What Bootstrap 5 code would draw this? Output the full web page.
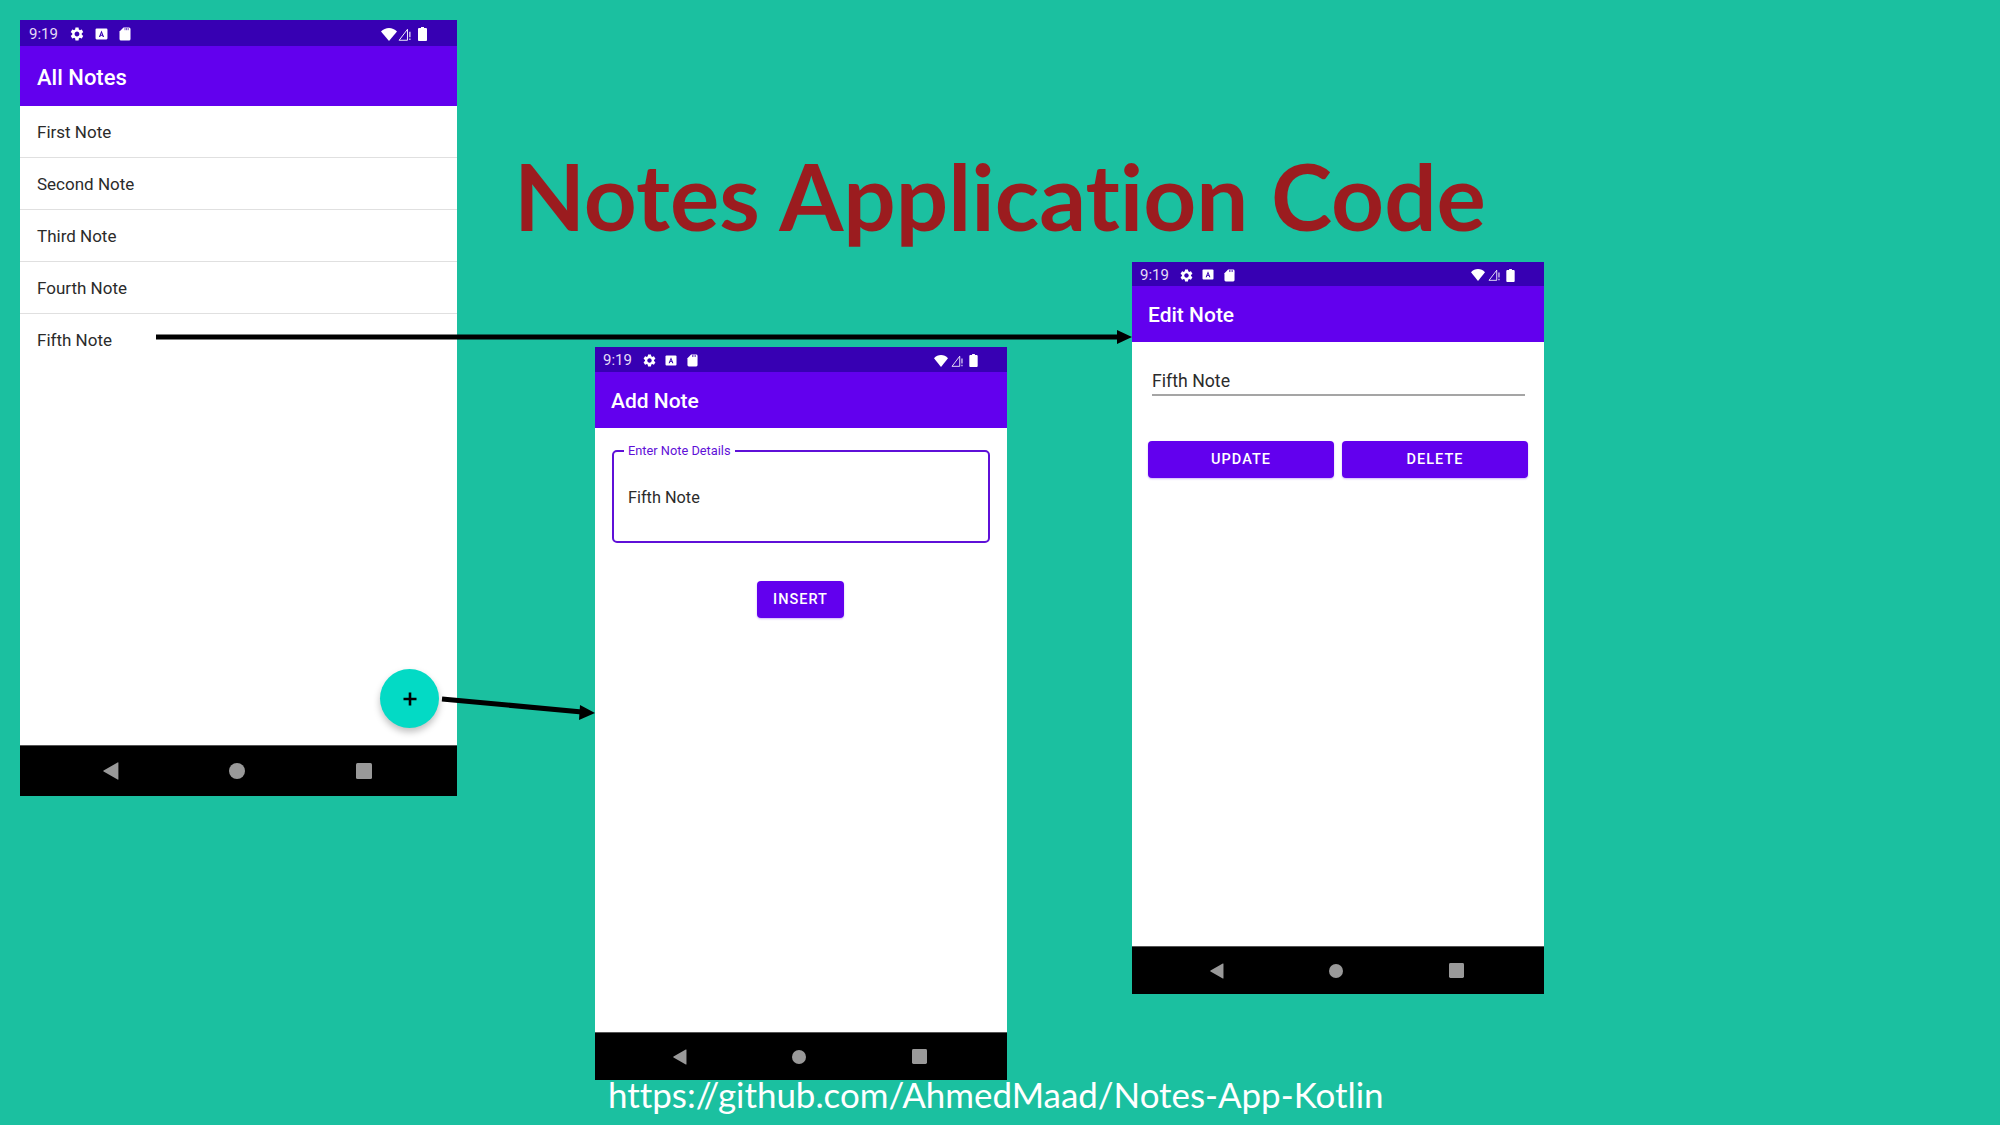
<!DOCTYPE html>
<html lang="en">
<head>
  <meta charset="UTF-8">
  <meta name="viewport" content="width=device-width, initial-scale=1.0">
  <title>Notes Application Code</title>
  <link href="https://cdn.jsdelivr.net/npm/bootstrap@5.3.0/dist/css/bootstrap.min.css" rel="stylesheet">
  <style>
    body {
      background-color: #1bc0a0;
      overflow: hidden;
    }
    .slide {
      width: 2000px;
      height: 1125px;
      font-family: Roboto, sans-serif;
    }
    .slide-title {
      left: 514px;
      top: 141px;
      margin: 0;
      font: 700 92.400px/1.2 Lato, sans-serif;
      font-variant-ligatures: none;
      color: #9b1c1f;
      white-space: nowrap;
    }
    .slide-link {
      left: 608px;
      top: 1074px;
      font: 400 34.900px/1.2 Lato, sans-serif;
      font-variant-ligatures: none;
      color: #fff;
      white-space: nowrap;
    }
    .arrows {
      left: 0;
      top: 0;
      z-index: 5;
      pointer-events: none;
    }
    /* phones sit on the slide like windows */
    .phone {
      width: 412px;
      background: #fff;
    }
    .phone-list { left: 20px; top: 20px; width: 437px; height: 776px; }
    .phone-add { left: 595px; top: 347px; height: 733px; }
    .phone-edit { left: 1132px; top: 262px; height: 732px; }
    .status-strip {
      height: 25px;
      padding: 2px 29px 0 8px;
      background: #3700b3;
      color: #e4dcf6;
      font-size: 15px;
    }
    .phone-edit .status-strip { height: 24px; }
    .phone-list .status-strip { height: 26px; padding: 2px 30px 0 9px; }
    .status-strip .clock { width: 30.500px; }
    .phone-list .status-strip .clock { width: 29.500px; }
    .status-left { gap: 8px; }
    .phone-list .status-left { gap: 10px; }
    .status-left .sd-ico { margin-left: 2px; }
    .phone-list .status-left .sd-ico { margin-left: 1px; }
    .status-right { gap: 3px; }
    .status-right .signal-ico { margin-right: 3px; }
    .phone-list .status-right { gap: 1px; }
    .phone-list .status-right .signal-ico { margin-right: 6px; }
    .status-strip svg { display: block; color: #fff; }
    .app-strip {
      height: 56px;
      padding: 4px 0 0 16px;
      background: #6200ee;
      color: #fff;
      font-size: 21px;
      font-weight: 500;
    }
    .phone-list .app-strip { height: 60px; padding: 3px 0 0 17px; font-size: 22px; }
    .note-row.list-group-item {
      height: 52px;
      padding: 2px 17px 0;
      display: flex;
      align-items: center;
      font-size: 17px;
      color: #2b2b2b;
      border-color: #e0e0e0;
      border-bottom-width: 1px;
    }
    .note-row.list-group-item:last-child { border-bottom: 0; }
    .screen { min-height: 0; }
    .outlined-box {
      height: 93px;
      margin: 22px 17px 0;
      border: 2px solid #5f10d8;
      border-radius: 5px;
    }
    .outlined-box label {
      left: 10px;
      top: -8px;
      padding: 0 4px;
      background: #fff;
      color: #5f10d8;
      font-size: 12.800px;
      line-height: 14px;
    }
    .outlined-box .form-control {
      height: 100%;
      padding: 2px 14px 0;
      border: 0;
      background: transparent;
      box-shadow: none;
      font-size: 16.300px;
      color: #2b2b2b;
    }
    .underline-input.form-control {
      width: 373px;
      margin: 28px 0 0 20px;
      padding: 0 0 2px 0;
      height: 26px;
      border: 0;
      border-bottom: 2px solid #a5a5a5;
      border-radius: 0;
      box-shadow: none;
      font-size: 17.700px;
      color: #2b2b2b;
    }
    .btn.purple-btn {
      height: 37px;
      padding: 1px 0 0;
      background: #6200ee;
      border: 0;
      border-radius: 4px;
      color: #fff;
      font-size: 14.500px;
      font-weight: 500;
      letter-spacing: 1px;
      box-shadow: 0 1px 2px rgba(98, 0, 238, .3);
    }
    .insert-btn { width: 87px; margin: 38px 1px 0 0; }
    .edit-actions {
      gap: 8px;
      margin: 45px 16px 0;
    }
    .edit-actions .btn { flex: 1 1 0; }
    .fab-add {
      right: 18px;
      bottom: 17px;
      width: 59px;
      height: 59px;
      background: #03dac5;
      box-shadow: 0 4px 7px rgba(0, 0, 0, .25);
    }
    .nav-strip {
      height: 48px;
      padding: 0 19.500% 0 19%;
      background: #000;
      border-top: 1px solid #555;
    }
    .phone-list .nav-strip { height: 51px; }
  </style>
</head>
<body>
  <!-- shared status and nav icons -->
  <svg width="0" height="0" class="position-absolute">
    <symbol id="ico-gear" viewBox="0 0 24 24"><path fill="currentColor" d="M19.14 12.94c.04-.3.06-.61.06-.94 0-.32-.02-.64-.07-.94l2.03-1.58c.18-.14.23-.41.12-.61l-1.92-3.32c-.12-.22-.37-.29-.59-.22l-2.39.96c-.5-.38-1.03-.7-1.62-.94l-.36-2.54c-.04-.24-.24-.41-.48-.41h-3.84c-.24 0-.43.17-.47.41l-.36 2.54c-.59.24-1.13.57-1.62.94l-2.39-.96c-.22-.08-.47 0-.59.22L2.74 8.87c-.12.21-.08.47.12.61l2.03 1.58c-.05.3-.09.63-.09.94s.02.64.07.94l-2.03 1.58c-.18.14-.23.41-.12.61l1.92 3.32c.12.22.37.29.59.22l2.39-.96c.5.38 1.03.7 1.62.94l.36 2.54c.05.24.24.41.48.41h3.84c.24 0 .44-.17.47-.41l.36-2.54c.59-.24 1.13-.56 1.62-.94l2.39.96c.22.08.47 0 .59-.22l1.92-3.32c.12-.22.07-.47-.12-.61l-2.01-1.58zM12 15.6c-1.98 0-3.6-1.62-3.6-3.6s1.62-3.6 3.6-3.6 3.6 1.62 3.6 3.6-1.62 3.6-3.6 3.6z"/></symbol>
    <symbol id="ico-store" viewBox="0 0 12 12"><rect x="0.5" y="0.5" width="11" height="10" rx="1" fill="currentColor"/><path d="M6 2.2 3.6 8.2h1.2l.4-1.1h1.6l.4 1.1h1.2L6 2.2zm0 2.3.5 1.7h-1L6 4.5z" fill="#3700b3"/></symbol>
    <symbol id="ico-sd" viewBox="0 0 12 14"><path fill="currentColor" d="M4.5 .5H10a1.5 1.5 0 0 1 1.5 1.5v10a1.5 1.5 0 0 1-1.5 1.5H2A1.5 1.5 0 0 1 .5 12V4.5z"/><path stroke="#3700b3" stroke-width=".7" d="M6 1v2.2M7.6 1v2.2M9.2 1v2.2"/></symbol>
    <symbol id="ico-wifi" viewBox="0 0 16 13" preserveAspectRatio="none"><path fill="currentColor" d="M0 3.500C2.200 1.300 5 0 8 0s5.800 1.300 8 3.500L8 13z"/></symbol>
    <symbol id="ico-signal" viewBox="0 0 14 14"><path fill="none" stroke="currentColor" stroke-width="1" d="M1.200 13.200 10.200 1.400v11.800z"/><path stroke="currentColor" stroke-width="1.200" d="M12.800 4v6M12.800 11.400v1.600"/></symbol>
    <symbol id="ico-batt" viewBox="0 0 9 14"><path fill="currentColor" d="M3 0h3v1h1.800c.6 0 1.200.5 1.200 1.100v10.800c0 .6-.6 1.100-1.200 1.100H1.200C.6 14 0 13.500 0 12.900V2.100C0 1.500.6 1 1.200 1H3z"/></symbol>
    <symbol id="ico-back" viewBox="0 0 16 18"><path fill="#999" d="M15.400 .8v16.400a.5.5 0 0 1-.8.4L.6 9.500a.6.6 0 0 1 0-1L14.600.4a.5.5 0 0 1 .8.4z"/></symbol>
    <symbol id="ico-home" viewBox="0 0 16 16"><circle cx="8" cy="8" r="8" fill="#999"/></symbol>
    <symbol id="ico-recent" viewBox="0 0 16 16"><rect width="16" height="16" rx="1.500" fill="#999"/></symbol>
  </svg>

  <div class="slide position-relative">
    <h1 class="slide-title position-absolute">Notes Application Code</h1>

    <!-- All Notes -->
    <div class="phone phone-list position-absolute d-flex flex-column">
      <div class="status-strip d-flex align-items-center justify-content-between">
        <div class="status-left d-flex align-items-center">
          <span class="clock">9:19</span>
          <svg width="16" height="16"><use href="#ico-gear"/></svg>
          <svg width="13" height="13"><use href="#ico-store"/></svg>
          <svg class="sd-ico" width="12" height="14"><use href="#ico-sd"/></svg>
        </div>
        <div class="status-right d-flex align-items-center">
          <svg width="16" height="13"><use href="#ico-wifi"/></svg>
          <svg class="signal-ico" width="13" height="13"><use href="#ico-signal"/></svg>
          <svg width="9" height="14"><use href="#ico-batt"/></svg>
        </div>
      </div>
      <div class="app-strip d-flex align-items-center">All Notes</div>
      <div class="screen flex-grow-1 position-relative">
        <ul class="list-group list-group-flush">
          <li class="list-group-item note-row">First Note</li>
          <li class="list-group-item note-row">Second Note</li>
          <li class="list-group-item note-row">Third Note</li>
          <li class="list-group-item note-row">Fourth Note</li>
          <li class="list-group-item note-row">Fifth Note</li>
        </ul>
        <div class="fab-add position-absolute rounded-circle d-flex align-items-center justify-content-center">
          <svg width="16" height="16" viewBox="0 0 16 16"><path stroke="#000" stroke-width="2.600" d="M8 1.500v13M1.500 8h13"/></svg>
        </div>
      </div>
      <div class="nav-strip d-flex align-items-center justify-content-between">
        <svg width="16" height="18"><use href="#ico-back"/></svg>
        <svg width="16" height="16"><use href="#ico-home"/></svg>
        <svg width="16" height="16"><use href="#ico-recent"/></svg>
      </div>
    </div>

    <!-- Add Note -->
    <div class="phone phone-add position-absolute d-flex flex-column">
      <div class="status-strip d-flex align-items-center justify-content-between">
        <div class="status-left d-flex align-items-center">
          <span class="clock">9:19</span>
          <svg width="15" height="15"><use href="#ico-gear"/></svg>
          <svg width="12" height="12"><use href="#ico-store"/></svg>
          <svg class="sd-ico" width="11" height="13"><use href="#ico-sd"/></svg>
        </div>
        <div class="status-right d-flex align-items-center">
          <svg width="14" height="12"><use href="#ico-wifi"/></svg>
          <svg class="signal-ico" width="12" height="12"><use href="#ico-signal"/></svg>
          <svg width="9" height="13"><use href="#ico-batt"/></svg>
        </div>
      </div>
      <div class="app-strip d-flex align-items-center">Add Note</div>
      <div class="screen flex-grow-1 d-flex flex-column">
        <div class="outlined-box position-relative">
          <label class="position-absolute" for="noteField">Enter Note Details</label>
          <input id="noteField" class="form-control" type="text" value="Fifth Note">
        </div>
        <button class="btn purple-btn insert-btn align-self-center">INSERT</button>
      </div>
      <div class="nav-strip d-flex align-items-center justify-content-between">
        <svg width="14" height="16"><use href="#ico-back"/></svg>
        <svg width="14" height="14"><use href="#ico-home"/></svg>
        <svg width="15" height="15"><use href="#ico-recent"/></svg>
      </div>
    </div>

    <!-- Edit Note -->
    <div class="phone phone-edit position-absolute d-flex flex-column">
      <div class="status-strip d-flex align-items-center justify-content-between">
        <div class="status-left d-flex align-items-center">
          <span class="clock">9:19</span>
          <svg width="15" height="15"><use href="#ico-gear"/></svg>
          <svg width="12" height="12"><use href="#ico-store"/></svg>
          <svg class="sd-ico" width="11" height="13"><use href="#ico-sd"/></svg>
        </div>
        <div class="status-right d-flex align-items-center">
          <svg width="14" height="12"><use href="#ico-wifi"/></svg>
          <svg class="signal-ico" width="12" height="12"><use href="#ico-signal"/></svg>
          <svg width="9" height="13"><use href="#ico-batt"/></svg>
        </div>
      </div>
      <div class="app-strip d-flex align-items-center">Edit Note</div>
      <div class="screen flex-grow-1 d-flex flex-column">
        <input class="form-control underline-input" type="text" value="Fifth Note">
        <div class="edit-actions d-flex">
          <button class="btn purple-btn">UPDATE</button>
          <button class="btn purple-btn">DELETE</button>
        </div>
      </div>
      <div class="nav-strip d-flex align-items-center justify-content-between">
        <svg width="14" height="16"><use href="#ico-back"/></svg>
        <svg width="14" height="14"><use href="#ico-home"/></svg>
        <svg width="15" height="15"><use href="#ico-recent"/></svg>
      </div>
    </div>

    <!-- arrows between the screens -->
    <svg class="arrows position-absolute" width="2000" height="1125">
      <path stroke="#000" stroke-width="5" d="M156 337H1120"/>
      <path d="M1132 337 1117 330v14z" fill="#000"/>
      <path stroke="#000" stroke-width="5" d="M442 699 582 712"/>
      <path d="M595 713 580 705 579 720z" fill="#000"/>
    </svg>

    <div class="slide-link position-absolute">https://github.com/AhmedMaad/Notes-App-Kotlin</div>
  </div>

  <script src="https://cdn.jsdelivr.net/npm/bootstrap@5.3.0/dist/js/bootstrap.bundle.min.js"></script>
</body>
</html>
